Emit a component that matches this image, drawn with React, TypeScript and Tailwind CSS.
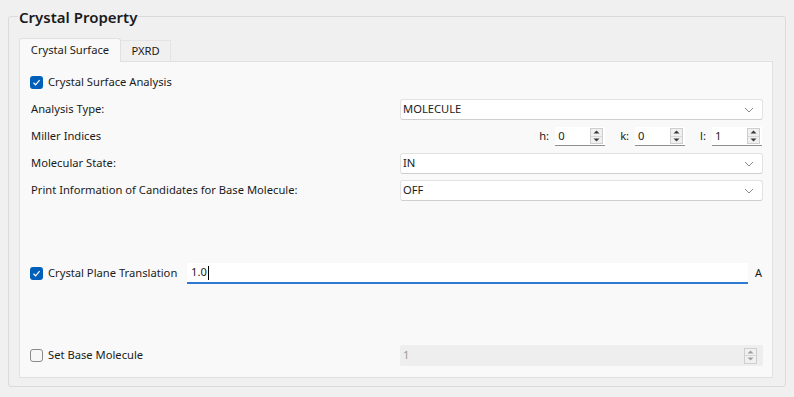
import React from "react";

const font = { fontFamily: '"Segoe UI", "Noto Sans", Arial, sans-serif' };

const Check: React.FC<{ checked?: boolean }> = ({ checked }) =>
  checked ? (
    <span className="flex h-[13px] w-[13px] shrink-0 items-center justify-center rounded-[3px] bg-[#005fb8]">
      <svg width="9" height="9" viewBox="0 0 9 9" fill="none">
        <path d="M1.5 4.8 L3.6 6.8 L7.6 2.2" stroke="white" strokeWidth="1.2" />
      </svg>
    </span>
  ) : (
    <span className="h-[13px] w-[13px] shrink-0 rounded-[3px] border border-[#8a8a8a] bg-[#f7f7f7]" />
  );

const Chevron = () => (
  <svg width="10" height="6" viewBox="0 0 10 6" fill="none">
    <path d="M1 1 L5 5 L9 1" stroke="#8a8a8a" strokeWidth="1" />
  </svg>
);

const Combo: React.FC<{ value: string }> = ({ value }) => (
  <div className="flex h-[21px] w-full items-center justify-between rounded-[3px] border border-[#e2e2e2] border-b-[#cfcfcf] bg-white pl-[2px] pr-[8px] text-[#1b1b1b]">
    <span>{value}</span>
    <Chevron />
  </div>
);

const Arrows: React.FC<{ disabled?: boolean }> = ({ disabled }) => {
  const c = disabled ? "#a0a0a0" : "#3a3a3a";
  return (
    <span className="flex h-[16px] w-[13px] flex-col border border-[#cfcfcf] bg-[#f0f0f0]">
      <span className="flex flex-1 items-center justify-center border-b border-[#d8d8d8]">
        <svg width="7" height="4" viewBox="0 0 7 4">
          <path d="M0.5 3.5 L3.5 0.5 L6.5 3.5 Z" fill={c} />
        </svg>
      </span>
      <span className="flex flex-1 items-center justify-center">
        <svg width="7" height="4" viewBox="0 0 7 4">
          <path d="M0.5 0.5 L3.5 3.5 L6.5 0.5 Z" fill={c} />
        </svg>
      </span>
    </span>
  );
};

const Spin: React.FC<{ label: string; value: string }> = ({ label, value }) => (
  <div className="flex items-center">
    <span className="mr-[6px]">{label}</span>
    <div className="flex h-[19px] w-[50px] items-center justify-between border-b border-[#8f8f8f] bg-white pl-[3px] pr-[2px]">
      <span>{value}</span>
      <Arrows />
    </div>
  </div>
);

export default function App() {
  return (
    <div className="h-[397px] w-[794px] bg-[#f0f0f0] pt-[16px] text-[#1b1b1b]" style={font}>
      <div className="mx-[8px] h-[371px] rounded-[3px] border border-[#dadada] pb-[9px] pl-[10px] pr-[12px]">
        <div className="-mt-[10px] ml-[-1px] block w-fit bg-[#f0f0f0] px-[1px] text-[15px] font-semibold leading-[20px]">
          Crystal Property
        </div>
        <div className="mt-[11px] flex h-[23px] items-end text-[11.2px]">
          <div className="relative z-10 mb-[-1px] flex h-[24px] w-[102px] items-center justify-center rounded-t-[3px] border border-b-0 border-[#e0e0e0] bg-[#f9f9f9]">
            Crystal Surface
          </div>
          <div className="flex h-[21px] w-[50px] items-center justify-center border border-b-0 border-l-0 border-[#e4e4e4] bg-[#f0f0f0]">
            PXRD
          </div>
        </div>
        <div className="flex h-[317px] flex-col border border-[#e0e0e0] bg-[#f9f9f9] pl-[10px] pr-[9px] pt-[6px] text-[11.2px]">
          <div className="flex h-[28px] items-center gap-[5px]">
            <Check checked />
            <span>Crystal Surface Analysis</span>
          </div>
          <div className="grid grid-cols-[370px_1fr] items-center">
            <span className="flex h-[27px] items-center pl-[1px]">Analysis Type:</span>
            <Combo value="MOLECULE" />
            <span className="flex h-[27px] items-center pl-[1px]">Miller Indices</span>
            <div className="flex items-center justify-end gap-[15px] pr-[1px]">
              <Spin label="h:" value="0" />
              <Spin label="k:" value="0" />
              <Spin label="l:" value="1" />
            </div>
            <span className="flex h-[27px] items-center pl-[1px]">Molecular State:</span>
            <Combo value="IN" />
            <span className="flex h-[27px] items-center pl-[1px]">Print Information of Candidates for Base Molecule:</span>
            <Combo value="OFF" />
          </div>
          <div className="mt-[56px] flex h-[27px] items-center">
            <Check checked />
            <span className="ml-[5px] w-[139px]">Crystal Plane Translation</span>
            <div className="flex h-[21px] flex-1 items-center border-b-2 border-[#2c7bd0] bg-white pl-[4px]">
              <span>1.0</span>
              <span className="ml-[1px] h-[14px] w-[1px] bg-black" />
            </div>
            <span className="ml-[7px] mr-[1px] text-[11px]">A</span>
          </div>
          <div className="mt-[55px] grid h-[27px] grid-cols-[370px_1fr] items-center">
            <div className="flex items-center gap-[5px]">
              <Check />
              <span>Set Base Molecule</span>
            </div>
            <div className="flex h-[21px] items-center justify-between rounded-[2px] bg-[#eeeeee] pl-[3px] pr-[6px] text-[#9a9a9a]">
              <span>1</span>
              <Arrows disabled />
            </div>
          </div>
        </div>
      </div>
    </div>
  );
}
